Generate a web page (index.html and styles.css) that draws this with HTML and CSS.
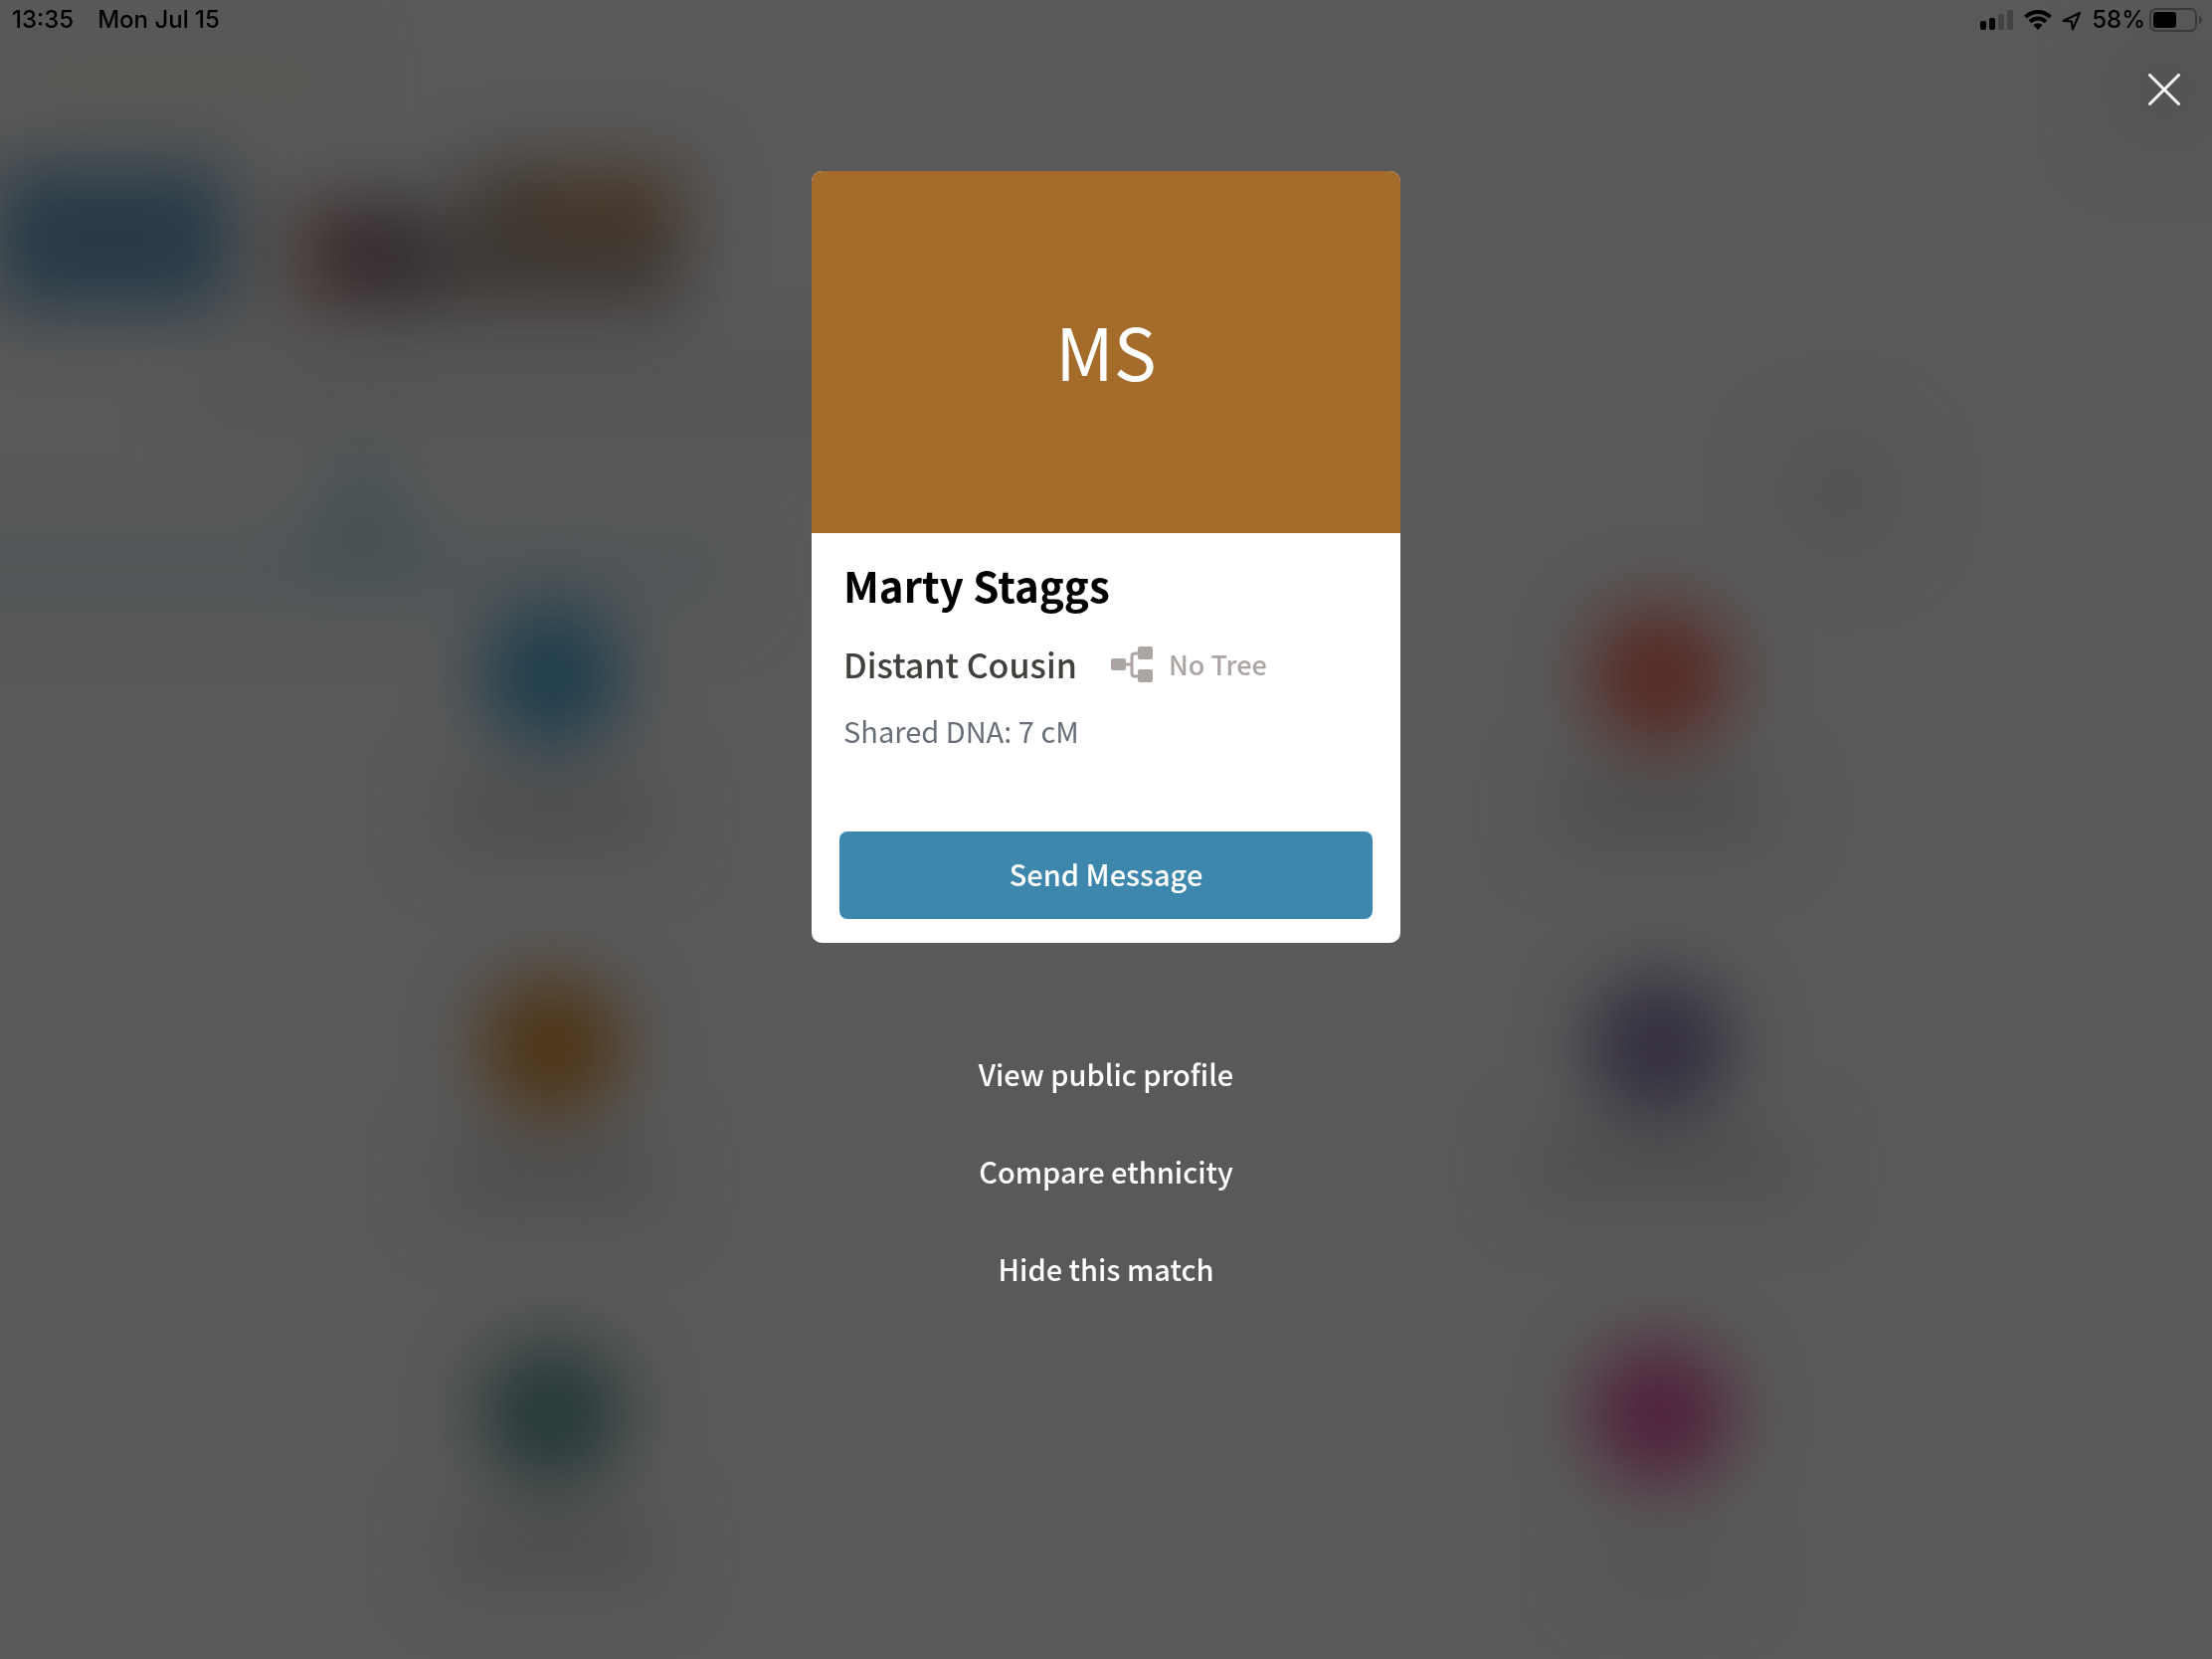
FILE: index.html
```html
<!DOCTYPE html>
<html lang="en">
<head>
<meta charset="utf-8">
<meta name="viewport" content="width=device-width, initial-scale=1">
<title>Marty Staggs</title>
<link rel="stylesheet" href="styles.css">
</head>
<body>
<svg class="backdrop" viewBox="0 0 2224 1668" preserveAspectRatio="none" aria-hidden="true">
  <defs>
    <filter id="soft" filterUnits="userSpaceOnUse" x="-200" y="-200" width="2624" height="2068" color-interpolation-filters="sRGB">
      <feGaussianBlur stdDeviation="35"/>
    </filter>
  </defs>
  <g filter="url(#soft)">
    <!-- header and match thumbnails -->
    <rect x="20" y="50" width="320" height="60" fill="#575753"/>
    <rect x="2130" y="40" width="94" height="100" fill="#525252"/>
    <rect x="-5" y="168" width="236" height="144" fill="#273a47"/>
    <rect x="270" y="200" width="60" height="120" fill="#504b48"/>
    <rect x="315" y="205" width="70" height="105" fill="#3d2a2a"/>
    <rect x="365" y="200" width="75" height="115" fill="#322c30"/>
    <rect x="470" y="168" width="217" height="90" fill="#463627"/>
    <rect x="470" y="168" width="70" height="90" fill="#3c342c"/>
    <rect x="430" y="240" width="257" height="72" fill="#3d3835"/>
    <rect x="200" y="370" width="700" height="50" fill="#525252"/>
    <!-- tab strip -->
    <rect x="-100" y="540" width="830" height="65" fill="#4f5557"/>
    <path d="M365 430L440 580H290Z" fill="#445155"/>
    <circle cx="1850" cy="495" r="60" fill="#535353"/>
    <!-- category grid -->
    <circle cx="555" cy="680" r="72" fill="#1f3e4d"/>
    <circle cx="555" cy="1052" r="72" fill="#4e3517"/>
    <circle cx="555" cy="1421" r="72" fill="#263938"/>
    <circle cx="1669" cy="680" r="72" fill="#572a25"/>
    <circle cx="1669" cy="1052" r="72" fill="#342e3f"/>
    <circle cx="1669" cy="1421" r="72" fill="#51223b"/>
    <g fill="#4d4d4d">
      <rect x="450" y="785" width="210" height="65"/>
      <rect x="450" y="1150" width="210" height="65"/>
      <rect x="450" y="1525" width="210" height="65"/>
      <rect x="1565" y="780" width="210" height="65"/>
      <rect x="1540" y="1145" width="270" height="55"/>
      <rect x="1605" y="1555" width="130" height="40" fill="#525252"/>
    </g>
  </g>
</svg>

<header class="status">
  <div class="status-side status-time"><span>13:35</span><span>Mon Jul 15</span></div>
  <div class="status-side status-icons">
    <svg width="34" height="24" viewBox="0 0 34 24" aria-hidden="true">
      <rect x="0" y="13" width="6" height="9" rx="2"/>
      <rect x="9" y="10" width="6" height="12" rx="2"/>
      <rect x="18" y="6" width="6" height="16" rx="2" fill="#424242"/>
      <rect x="27" y="2" width="6" height="20" rx="2" fill="#424242"/>
    </svg>
    <svg width="28" height="24" viewBox="0 0 28 24" aria-hidden="true">
      <g fill="none" stroke="#000" stroke-width="4">
        <path d="M1.4 9.2C8.5 2.2 19.5 2.2 26.6 9.2"/>
        <path d="M6 13.9C10.6 9.5 17.4 9.5 22 13.9"/>
      </g>
      <path d="M14 22L9.4 17.3C12 15 16 15 18.6 17.3Z"/>
    </svg>
    <svg width="20" height="24" viewBox="0 0 20 24" aria-hidden="true">
      <path d="M1.5 13L18 5L11 21.500L9.7 13.500Z" fill="none" stroke="#000" stroke-width="2" stroke-linejoin="round"/>
    </svg>
    <span>58%</span>
    <svg class="battery" width="53" height="24" viewBox="0 0 53 24" aria-hidden="true">
      <rect x="1" y="1" width="46" height="22" rx="6" fill="none" stroke="#3a3a3a" stroke-width="2"/>
      <rect x="4" y="4" width="23" height="16" rx="3"/>
      <path d="M50 8C54 9.500 54 14.500 50 16Z" fill="#3a3a3a"/>
    </svg>
  </div>
</header>

<div class="toolbar">
  <button class="close" type="button" aria-label="Close">
    <svg width="32" height="32" viewBox="0 0 32 32" aria-hidden="true"><path d="M1.500 1.500L30.500 30.500M30.500 1.500L1.500 30.500" stroke="#fff" stroke-width="3" stroke-linecap="round"/></svg>
  </button>
</div>

<main class="profile">
  <article class="card">
    <div class="avatar">MS</div>
    <div class="details">
      <h1 class="name">Marty Staggs</h1>
      <div class="relation">
        <h2 class="cousin">Distant Cousin</h2>
        <span class="tree">
          <svg width="42" height="36" viewBox="0 0 42 36" aria-hidden="true">
            <path d="M14 18H21M28 7H24Q21 7 21 10V27Q21 30 24 30H28" fill="none" stroke="#aba6a3" stroke-width="3"/>
            <g fill="#aba6a3"><rect x="0" y="12" width="15" height="12" rx="2"/><rect x="27" y="0" width="15" height="13" rx="2"/><rect x="27" y="23" width="15" height="13" rx="2"/></g>
          </svg>
          No Tree
        </span>
      </div>
      <p class="dna">Shared DNA: 7 cM</p>
    </div>
    <button class="send" type="button">Send Message</button>
  </article>
  <nav class="actions" aria-label="Match actions">
    <button class="action" type="button">View public profile</button>
    <button class="action" type="button">Compare ethnicity</button>
    <button class="action" type="button">Hide this match</button>
  </nav>
</main>
</body>
</html>
```
FILE: styles.css
```css
* { box-sizing: border-box; }

body {
  margin: 0;
  min-height: 100vh;
  background: #595959;
  color: #000;
  font-family: "Noto Sans CJK SC", "Noto Sans", sans-serif;
}

button {
  border: 0;
  padding: 0;
  background: none;
  color: #fff;
  font: inherit;
  cursor: pointer;
}

svg { display: block; flex: none; }

.backdrop {
  position: fixed;
  inset: 0;
  z-index: -1;
  width: 100%;
  height: 100%;
}

.status {
  display: flex;
  justify-content: space-between;
  height: 40px;
  padding: 0 10px 0 12px;
  font: 500 24px/40px Inter, "Liberation Sans", sans-serif;
}

.status-side { display: flex; align-items: center; }
.status-time { gap: 24px; }
.status-icons { gap: 10px; }
.battery { margin-left: -6px; }

.toolbar {
  display: flex;
  justify-content: flex-end;
  padding: 18px 16px 50px;
}

.close {
  display: grid;
  place-items: center;
  width: 64px;
  height: 64px;
}

.profile {
  display: flex;
  flex-direction: column;
  align-items: center;
  padding: 0 16px 48px;
}

.card {
  display: flex;
  flex-direction: column;
  width: 100%;
  max-width: 592px;
  overflow: hidden;
  border-radius: 10px;
  background: #fff;
}

.avatar {
  display: grid;
  place-items: center;
  height: 364px;
  padding-bottom: 4px;
  background: #a46b2a;
  color: #fff;
  font-size: 72px;
  line-height: 108px;
}

.details { padding: 20px 32px 0; }

.name {
  margin: 0;
  font-size: 42px;
  font-weight: 700;
  line-height: 64px;
}

.relation {
  display: flex;
  flex-wrap: wrap;
  align-items: center;
  column-gap: 34px;
  margin-top: 24px;
}

.cousin {
  margin: 0;
  color: #41403c;
  font-size: 34px;
  font-weight: 500;
  line-height: 48px;
}

.tree {
  display: flex;
  align-items: center;
  gap: 16px;
  color: #aba6a3;
  font-size: 27px;
  font-weight: 500;
  line-height: 48px;
}

.dna {
  margin: 18px 0 0;
  color: #686f78;
  font-size: 29px;
  line-height: 48px;
}

.send {
  height: 88px;
  margin: 78px 28px 24px;
  padding-bottom: 4px;
  border-radius: 8px;
  background: #3d87ad;
  font-size: 29px;
  font-weight: 500;
}

.actions {
  display: flex;
  flex-direction: column;
  align-items: center;
  margin-top: 82px;
}

.action {
  height: 98px;
  padding: 0 24px;
  font-size: 29px;
  font-weight: 500;
}
```
